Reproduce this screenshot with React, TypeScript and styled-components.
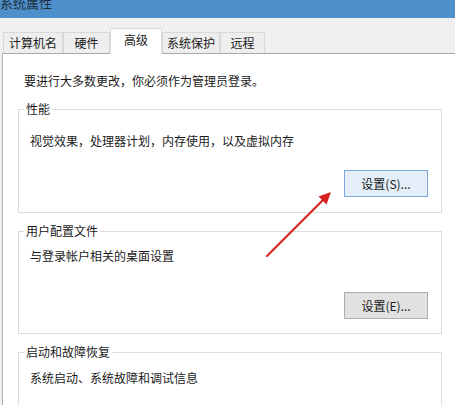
import React from 'react';
import styled, { createGlobalStyle } from 'styled-components';

const GlobalStyle = createGlobalStyle`
  html, body {
    margin: 0;
    padding: 0;
    height: 405px;
    overflow: hidden;
    background: #ffffff;
  }
  body {
    font-family: "Noto Sans CJK SC", "Liberation Sans", sans-serif;
    font-size: 12px;
    color: #1a1a1a;
  }
`;

const Window = styled.div`
  position: relative;
  width: 455px;
  height: 405px;
  overflow: hidden;
  background: #f0f0f0;
`;

const TitleBar = styled.div`
  height: 18px;
  background: #4e90cc;
  overflow: hidden;
`;

const Title = styled.div`
  margin-top: -5px;
  font-size: 13px;
  line-height: 16px;
  color: #1e2f40;
`;

const TabStrip = styled.div`
  display: flex;
  align-items: flex-end;
  height: 35px;
  box-sizing: border-box;
  padding: 10px 0 0 3px;
`;

const Tab = styled.div<{ $width: number; $active?: boolean }>`
  position: relative;
  z-index: ${(p) => (p.$active ? 2 : 1)};
  display: flex;
  align-items: center;
  justify-content: center;
  box-sizing: border-box;
  width: ${(p) => p.$width}px;
  height: ${(p) => (p.$active ? 26 : 21)}px;
  margin-bottom: ${(p) => (p.$active ? -1 : 0)}px;
  padding-bottom: ${(p) => (p.$active ? 4 : 0)}px;
  border: 1px solid #d9d9d9;
  border-bottom: none;
  background: ${(p) => (p.$active ? '#ffffff' : '#eeeeee')};
  font-size: 12px;
  line-height: 16px;
  white-space: nowrap;
`;

const Panel = styled.div`
  margin-left: 2px;
  height: 352px;
  box-sizing: border-box;
  padding: 19px 0 0 15px;
  background: #ffffff;
  border-top: 1px solid #a9a9a9;
  border-left: 1px solid #b4b4b4;
`;

const Intro = styled.div`
  margin-left: 6px;
  line-height: 16px;
`;

const Group = styled.fieldset<{ $gap: number }>`
  width: 424px;
  box-sizing: border-box;
  margin: ${(p) => p.$gap}px 0 0 0;
  padding: 0;
  border: 1px solid #dcdcdc;
  min-width: 0;
`;

const Legend = styled.legend`
  margin-left: 5px;
  padding: 0 2px;
  line-height: 16px;
  font-size: 12px;
`;

const GroupBody = styled.div<{ $top: number; $bottom: number }>`
  padding: ${(p) => p.$top}px 13px ${(p) => p.$bottom}px 11px;
`;

const Description = styled.div`
  line-height: 16px;
  white-space: nowrap;
`;

const ButtonRow = styled.div<{ $top: number }>`
  display: flex;
  justify-content: flex-end;
  margin-top: ${(p) => p.$top}px;
`;

const Button = styled.button<{ $focused?: boolean }>`
  width: 84px;
  height: 27px;
  padding: 0;
  box-sizing: border-box;
  font-family: "Noto Sans CJK SC", "Liberation Sans", sans-serif;
  font-size: 12px;
  color: #1a1a1a;
  border: 1px solid ${(p) => (p.$focused ? '#7ba8d8' : '#adadad')};
  background: ${(p) => (p.$focused ? '#e3eef9' : '#e1e1e1')};
`;

const Overlay = styled.svg`
  position: absolute;
  left: 0;
  top: 0;
  pointer-events: none;
`;

const tabs = [
  { label: '计算机名', width: 60 },
  { label: '硬件', width: 47 },
  { label: '高级', width: 52, active: true },
  { label: '系统保护', width: 58 },
  { label: '远程', width: 45 },
];

const App: React.FC = () => {
  return (
    <Window>
      <GlobalStyle />
      <TitleBar>
        <Title>系统属性</Title>
      </TitleBar>
      <TabStrip>
        {tabs.map((t) => (
          <Tab key={t.label} $width={t.width} $active={t.active}>
            {t.label}
          </Tab>
        ))}
      </TabStrip>
      <Panel>
        <Intro>要进行大多数更改，你必须作为管理员登录。</Intro>

        <Group $gap={12}>
          <Legend>性能</Legend>
          <GroupBody $top={16} $bottom={15}>
            <Description>视觉效果，处理器计划，内存使用，以及虚拟内存</Description>
            <ButtonRow $top={21}>
              <Button $focused>设置(S)...</Button>
            </ButtonRow>
          </GroupBody>
        </Group>

        <Group $gap={10}>
          <Legend>用户配置文件</Legend>
          <GroupBody $top={9} $bottom={14}>
            <Description>与登录帐户相关的桌面设置</Description>
            <ButtonRow $top={28}>
              <Button>设置(E)...</Button>
            </ButtonRow>
          </GroupBody>
        </Group>

        <Group $gap={10}>
          <Legend>启动和故障恢复</Legend>
          <GroupBody $top={10} $bottom={60}>
            <Description>系统启动、系统故障和调试信息</Description>
          </GroupBody>
        </Group>
      </Panel>

      <Overlay width={455} height={405} viewBox="0 0 455 405">
        <line x1={267} y1={256} x2={323} y2={200} stroke="#d8201e" strokeWidth={2} strokeLinecap="round" />
        <polygon points="331,192 326.5,204.5 318.5,196.5" fill="#d8201e" />
      </Overlay>
    </Window>
  );
};

export default App;
